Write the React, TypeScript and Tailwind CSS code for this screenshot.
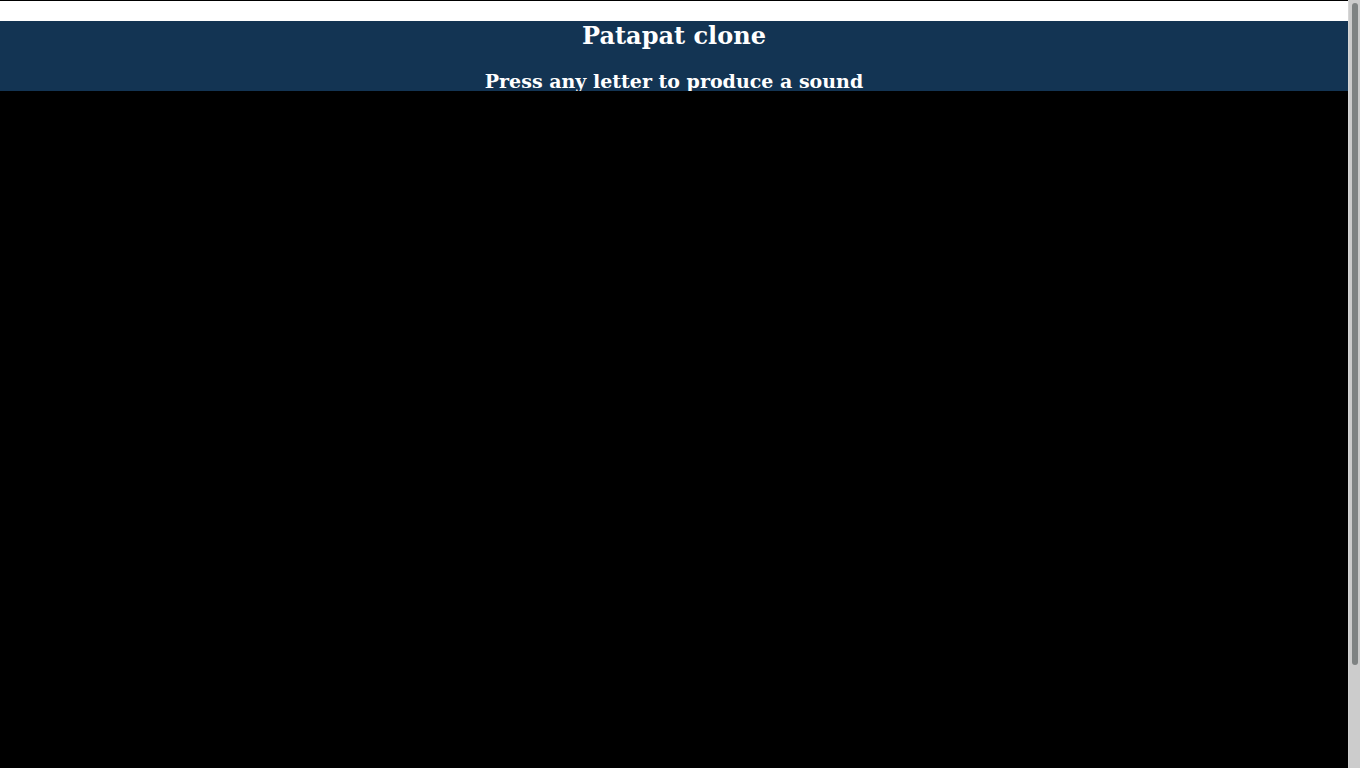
import React from "react";

export default function App() {
  return (
    <div className="flex h-screen overflow-hidden bg-black" style={{ fontFamily: '"DejaVu Serif", serif' }}>
      <main className="flex-1 min-w-0 flex flex-col">
        <div className="border-t border-black h-[21px] bg-white" />
        <header className="bg-[#133453] h-[70px] pt-[1px] overflow-hidden flex flex-col items-center text-white">
          <h1 className="text-[24px] leading-[28px] font-bold">Patapat clone</h1>
          <h2 className="mt-[20px] text-[19px] leading-[22px] font-bold">Press any letter to produce a sound</h2>
        </header>
        <div className="bg-black flex-1" />
      </main>
      <aside className="w-[12px] shrink-0 bg-[#cccccc] border-l border-[#d6d6d6] flex justify-center pt-[3px]">
        <div className="w-[6px] h-[662px] rounded-[3px] bg-[#7f8383]" />
      </aside>
    </div>
  );
}
